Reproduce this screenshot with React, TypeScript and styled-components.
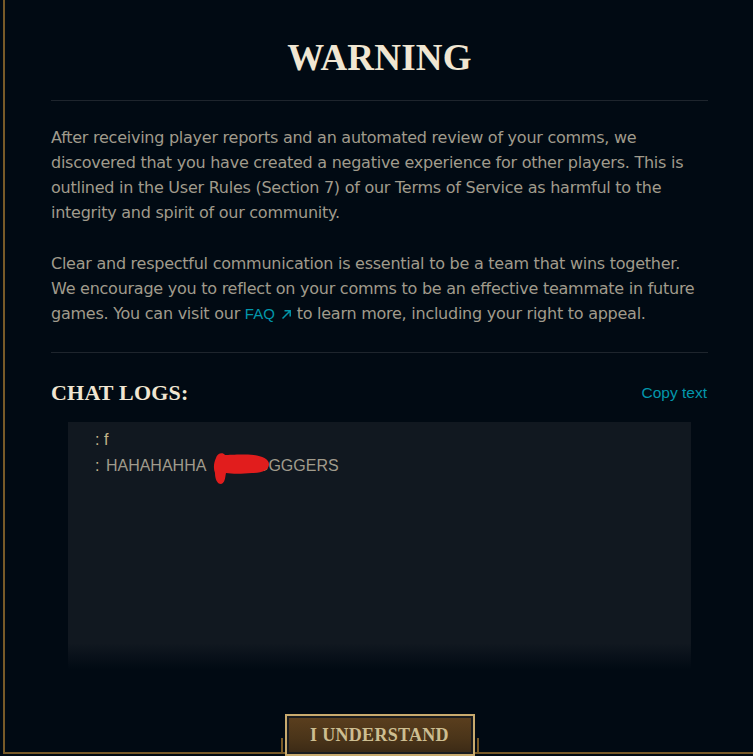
import styled, { createGlobalStyle } from "styled-components";

const GlobalStyle = createGlobalStyle`
  html, body {
    margin: 0;
    padding: 0;
    background: #010a13;
    overflow: hidden;
  }
  body {
    font-family: "Liberation Sans", Arial, sans-serif;
  }
`;

const Page = styled.div`
  width: 753px;
  height: 756px;
  overflow: hidden;
  background: #010a13;
`;

const Frame = styled.div`
  position: relative;
  box-sizing: border-box;
  margin-left: 3px;
  width: 753px;
  height: 754px;
  border: 2px solid #785a28;
  border-top: none;
  padding: 0 46px;
  display: flex;
  flex-direction: column;
`;

const Title = styled.h1`
  margin: 36px 0 0;
  font-family: "Liberation Serif", "Times New Roman", serif;
  font-weight: 700;
  font-size: 37px;
  line-height: 44px;
  letter-spacing: 0.2px;
  color: #f0e6d2;
  text-align: center;
`;

const Divider = styled.div<{ $top: number }>`
  height: 1px;
  margin-top: ${(p) => p.$top}px;
  background: #1e252d;
`;

const Body = styled.div`
  margin-top: 24px;
  display: flex;
  flex-direction: column;
  gap: 26px;
`;

const Paragraph = styled.p`
  margin: 0;
  font-family: "DejaVu Sans", "Liberation Sans", sans-serif;
  font-size: 16px;
  line-height: 25px;
  letter-spacing: -0.25px;
  color: #a09b8c;
`;

const Link = styled.a`
  display: inline-block;
  color: #0397ab;
  font-family: "Liberation Sans", Arial, sans-serif;
  font-size: 15px;
  line-height: 18px;
  letter-spacing: 0;
  text-decoration: none;
  white-space: nowrap;
`;

const Arrow = styled.svg`
  display: inline-block;
  margin-left: 6px;
  vertical-align: -1px;
`;

const ChatHeader = styled.div`
  margin-top: 26px;
  display: flex;
  justify-content: space-between;
  align-items: center;
  height: 28px;
`;

const SectionTitle = styled.h2`
  margin: 0;
  font-family: "Liberation Serif", "Times New Roman", serif;
  font-weight: 700;
  font-size: 22px;
  line-height: 28px;
  letter-spacing: 0.2px;
  color: #f0e6d2;
`;

const CopyButton = styled.button`
  border: none;
  background: none;
  padding: 0;
  margin-right: 1px;
  font-family: "Liberation Sans", Arial, sans-serif;
  font-size: 15.5px;
  color: #0397ab;
  cursor: pointer;
`;

const ChatBox = styled.div`
  margin: 15px 17px 0;
  height: 247px;
  box-sizing: border-box;
  padding: 5px 27px 0;
  background: linear-gradient(
    to bottom,
    #111820 0,
    #111820 calc(100% - 26px),
    #010a13 100%
  );
`;

const ChatLine = styled.div`
  position: relative;
  font-size: 16px;
  line-height: 26px;
  color: #a09b8c;
  white-space: nowrap;
`;

const Sender = styled.span`
  color: #c4b68a;
`;

const Message = styled.span`
  margin-left: 2px;
`;

const Hidden = styled.span`
  display: inline-block;
  width: 46px;
`;

const Scribble = styled.svg`
  position: absolute;
  left: 117px;
  top: -1px;
  width: 58px;
  height: 33px;
`;

const ButtonMount = styled.div`
  position: absolute;
  left: 50%;
  bottom: -4px;
  transform: translateX(-50%);
  width: 198px;
  height: 42px;
  display: flex;
  justify-content: center;

  &::before,
  &::after {
    content: "";
    position: absolute;
    bottom: 4px;
    width: 2px;
    height: 14px;
    background: #785a28;
  }
  &::before {
    left: 0;
  }
  &::after {
    right: 0;
  }
`;

const UnderstandButton = styled.button`
  box-sizing: border-box;
  width: 190px;
  height: 42px;
  border: 2px solid #c8aa6e;
  box-shadow: inset 0 0 0 2px #1a1c1f;
  background: linear-gradient(to bottom, #5b3f1e 0%, #4a3419 60%, #3a2915 100%);
  font-family: "Liberation Serif", "Times New Roman", serif;
  font-weight: 700;
  font-size: 18px;
  letter-spacing: 0.3px;
  color: #cdbe91;
  padding: 0;
  cursor: pointer;
`;

export default function App() {
  return (
    <Page>
      <GlobalStyle />
      <Frame>
        <Title>WARNING</Title>
        <Divider $top={20} />
        <Body>
          <Paragraph>
            After receiving player reports and an automated review of your comms, we discovered that
            you have created a negative experience for other players. This is outlined in the User
            Rules (Section 7) of our Terms of Service as harmful to the integrity and spirit of our
            community.
          </Paragraph>
          <Paragraph>
            Clear and respectful communication is essential to be a team that wins together. We
            encourage you to reflect on your comms to be an effective teammate in future games. You
            can visit our{" "}
            <Link href="#">
              FAQ
              <Arrow width="11" height="11" viewBox="0 0 11 11" fill="none">
                <path d="M1.5 9.5 L9 2 M3.5 1.8 H9.2 V7.5" stroke="#0397ab" strokeWidth="1.5" />
              </Arrow>
            </Link>{" "}
            to learn more, including your right to appeal.
          </Paragraph>
        </Body>
        <Divider $top={26} />
        <ChatHeader>
          <SectionTitle>CHAT LOGS:</SectionTitle>
          <CopyButton>Copy text</CopyButton>
        </ChatHeader>
        <ChatBox>
          <ChatLine>
            <Sender>: f</Sender>
          </ChatLine>
          <ChatLine>
            <Sender>:</Sender>
            <Message>
              {" "}HAHAHAHHA <Hidden />GGGGERS
            </Message>
            <Scribble viewBox="0 0 58 33">
              <path
                d="M4 6 C5 1 11 0 13 3 C18 3 30 2 42 3 C50 4 57 7 57 12 C57 18 50 21 40 21 C30 22 20 22 14 21 C13 26 13 31 9 32 C5 32 3 27 3 21 C1 16 2 10 4 6 Z"
                fill="#e11d1d"
              />
            </Scribble>
          </ChatLine>
        </ChatBox>
        <ButtonMount>
          <UnderstandButton>I UNDERSTAND</UnderstandButton>
        </ButtonMount>
      </Frame>
    </Page>
  );
}
